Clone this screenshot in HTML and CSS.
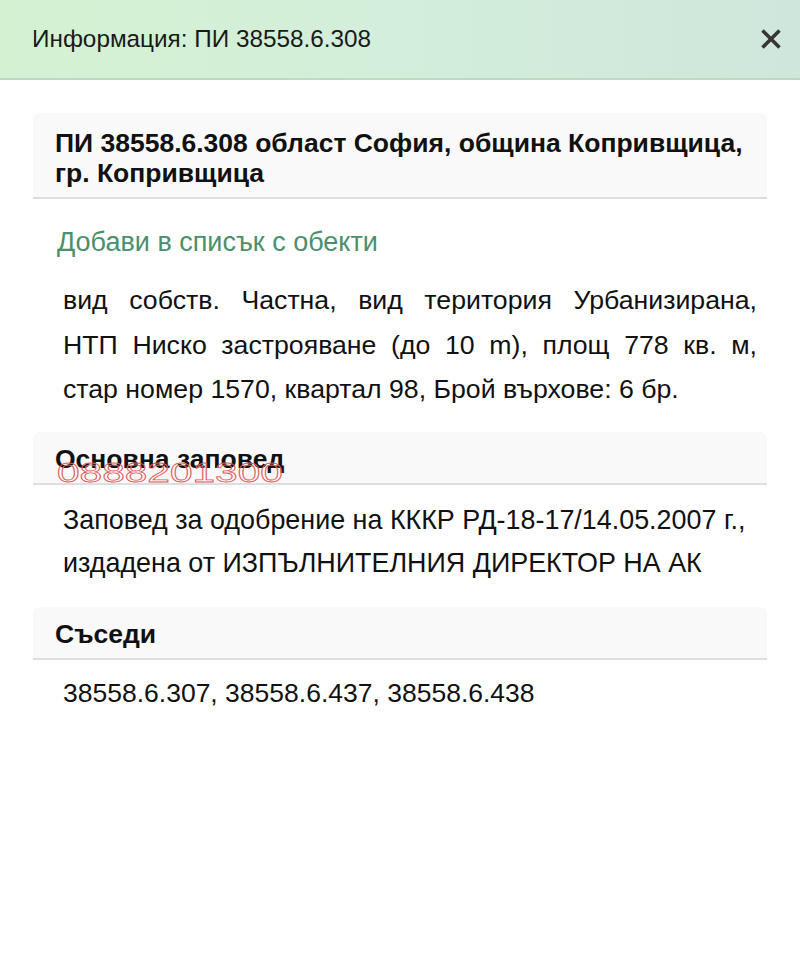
FILE: index.html
```html
<!DOCTYPE html>
<html lang="bg">
<head>
<meta charset="utf-8">
<link rel="stylesheet" href="styles.css">
</head>
<body>
<div class="dialog">
  <header class="topbar">
    <div class="title">Информация: ПИ 38558.6.308</div>
    <svg class="close" viewBox="0 0 20 20" width="20" height="20"><path d="M1.5 1.5 L18.5 18.5 M18.5 1.5 L1.5 18.5" stroke="#363636" stroke-width="3.6"/></svg>
  </header>
  <main class="content">
    <section class="card">
      <h2 class="card-head big">ПИ 38558.6.308 област София, община Копривщица,<br>гр. Копривщица</h2>
      <a class="addlink" href="#">Добави в списък с обекти</a>
      <p class="desc"><span class="jl">вид собств. Частна, вид територия Урбанизирана,</span><span class="jl">НТП Ниско застрояване (до 10 m), площ 778 кв. м,</span><span class="ln">стар номер 1570, квартал 98, Брой върхове: 6 бр.</span></p>
    </section>
    <section class="card">
      <h2 class="card-head">Основна заповед<span class="watermark">0888201300</span></h2>
      <p class="text t2">Заповед за одобрение на КККР РД-18-17/14.05.2007 г.,<br>издадена от ИЗПЪЛНИТЕЛНИЯ ДИРЕКТОР НА АК</p>
    </section>
    <section class="card">
      <h2 class="card-head">Съседи</h2>
      <p class="text t3">38558.6.307, 38558.6.437, 38558.6.438</p>
    </section>
  </main>
</div>
</body>
</html>
```
FILE: styles.css
```css
* { box-sizing: border-box; }
html, body { margin: 0; padding: 0; background: #fff; }
body { font-family: "Liberation Sans", Arial, Helvetica, sans-serif; color: #111; }
.dialog { width: 800px; height: 961px; background: #fff; }
.topbar {
  height: 80px;
  display: flex; align-items: center; justify-content: space-between;
  padding: 0 19px 0 32px;
  background: linear-gradient(90deg, #d4f2d2 0%, #d3eedb 50%, #cfe6dc 100%);
  border-bottom: 2px solid #c3d6c4;
}
.title { font-size: 24.3px; color: #1a1a1a; }
.close { display: block; }
.content { padding: 33px 33px 0 33px; display: flex; flex-direction: column; }
.card { display: flex; flex-direction: column; }
.card-head {
  margin: 0; position: relative;
  background: #f9f9f9; border-radius: 7px 7px 0 0;
  border-bottom: 2px solid #dedede;
  font-size: 26.5px; font-weight: bold; line-height: 30px;
  padding: 12px 22px 9px 22px; color: #111;
}
.card-head.big { padding: 15px 22px 9px 22px; }
.watermark {
  position: absolute; left: 24px; top: 27px;
  font-weight: normal;
  font-size: 28px; line-height: 28px;
  color: transparent; -webkit-text-stroke: 0.8px #e05a5a;
  transform: scaleX(1.45); transform-origin: left top;
  white-space: nowrap;
}
.addlink {
  display: block; color: #4b8f6b; text-decoration: none;
  font-size: 27px; line-height: 30px; margin: 28px 0 0 24px;
}
.desc {
  margin: 21px 10px 20px 30px;
  font-size: 26.7px; line-height: 44.5px; text-align: justify;
}
.desc span { display: block; }
.desc .jl { text-align-last: justify; }
.text { margin: 14px 0 21px 30px; font-size: 26.5px; line-height: 43.5px; }
.t2 { font-size: 26.9px; }
.t3 { margin-top: 12px; }
```
